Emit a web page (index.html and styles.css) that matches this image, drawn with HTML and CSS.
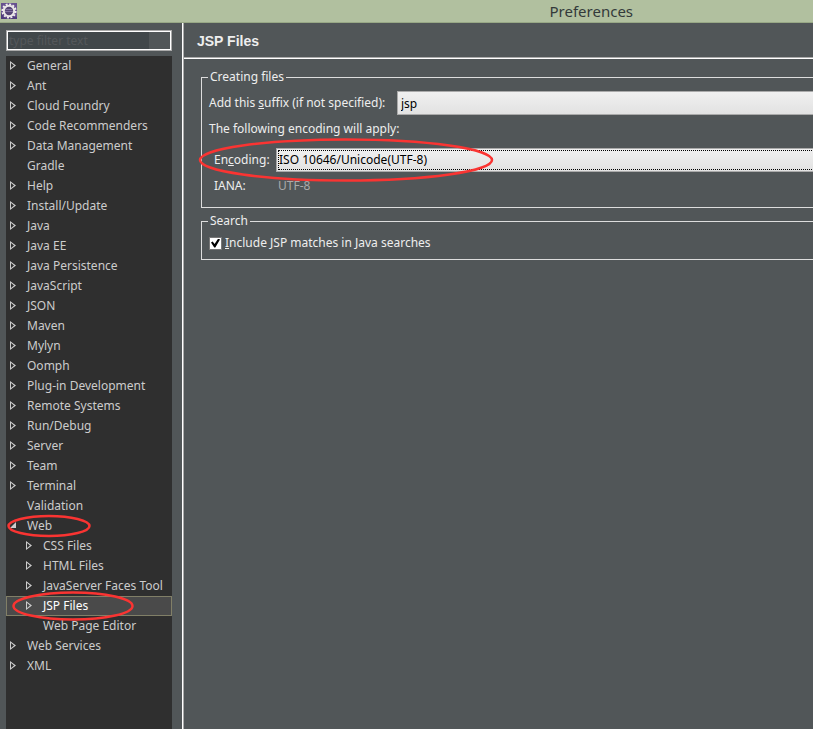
FILE: index.html
```html
<!DOCTYPE html>
<html lang="en">
<head>
<meta charset="utf-8">
<title>Preferences</title>
<link rel="stylesheet" href="styles.css">
</head>
<body>
<div class="window">
  <header class="titlebar">
    <svg class="app-icon" viewBox="0 0 16 16" aria-hidden="true">
      <rect width="16" height="16" fill="#67518f"/>
      <path d="M0 16V10L16 14V16Z" fill="#503b7c"/>
      <circle cx="8" cy="8" r="6.7" fill="none" stroke="#f2eff0" stroke-width="1.8" stroke-dasharray="2 1.5"/>
      <circle cx="8" cy="8" r="5.2" fill="#554575" stroke="#ece8e8" stroke-width="2"/>
      <path d="M4.5 6.500h7M4 8.500h8" stroke="#8474a2"/>
    </svg>
    <h1 class="window-title">Preferences</h1>
  </header>
  <div class="body">
    <nav class="sidebar" aria-label="Preference pages">
      <div class="filter"><input type="text" class="filter-input" placeholder="type filter text" aria-label="Filter"></div>
      <ul class="tree">
        <li class="node closed">General</li>
        <li class="node closed">Ant</li>
        <li class="node closed">Cloud Foundry</li>
        <li class="node closed">Code Recommenders</li>
        <li class="node closed">Data Management</li>
        <li class="node">Gradle</li>
        <li class="node closed">Help</li>
        <li class="node closed">Install/Update</li>
        <li class="node closed">Java</li>
        <li class="node closed">Java EE</li>
        <li class="node closed">Java Persistence</li>
        <li class="node closed">JavaScript</li>
        <li class="node closed">JSON</li>
        <li class="node closed">Maven</li>
        <li class="node closed">Mylyn</li>
        <li class="node closed">Oomph</li>
        <li class="node closed">Plug-in Development</li>
        <li class="node closed">Remote Systems</li>
        <li class="node closed">Run/Debug</li>
        <li class="node closed">Server</li>
        <li class="node closed">Team</li>
        <li class="node closed">Terminal</li>
        <li class="node">Validation</li>
        <li class="node open">Web<svg class="ring ring-web" viewBox="0 0 84 22" aria-hidden="true"><ellipse cx="41" cy="11" rx="40.500" ry="10"/></svg></li>
        <li class="node child closed">CSS Files</li>
        <li class="node child closed">HTML Files</li>
        <li class="node child closed">JavaServer Faces Tool</li>
        <li class="node child closed selected">JSP Files<svg class="ring ring-jsp" viewBox="0 0 122 30" aria-hidden="true"><ellipse cx="61" cy="15" rx="59.500" ry="13.500"/></svg></li>
        <li class="node child">Web Page Editor</li>
        <li class="node closed">Web Services</li>
        <li class="node closed">XML</li>
      </ul>
    </nav>
    <main class="page">
      <h2 class="page-title">JSP Files</h2>
      <form class="groups">
        <fieldset class="group">
          <legend>Creating files</legend>
          <div class="row">
            <label for="suffix" class="suffix-label">Add this <u>s</u>uffix (if not specified):</label>
            <input type="text" id="suffix" class="field" value="jsp">
          </div>
          <p class="note">The following encoding will apply:</p>
          <div class="row encoding">
            <label for="encoding" class="indent">En<u>c</u>oding:</label>
            <select id="encoding" class="field select"><option>ISO 10646/Unicode(UTF-8)</option></select>
            <svg class="ring ring-encoding" viewBox="0 0 296 44" aria-hidden="true"><ellipse cx="148" cy="22" rx="146" ry="20.500"/></svg>
          </div>
          <div class="row iana">
            <span class="indent">IANA:</span>
            <output class="iana-value">UTF-8</output>
          </div>
        </fieldset>
        <fieldset class="group search">
          <legend>Search</legend>
          <label class="check"><input type="checkbox" checked><span><u>I</u>nclude JSP matches in Java searches</span></label>
        </fieldset>
      </form>
    </main>
  </div>
</div>
</body>
</html>
```

FILE: styles.css
```css
* { box-sizing: border-box; }

body {
  margin: 0;
  background: #515658;
  color: #eee;
  font: 12px/20px "Noto Sans", "Open Sans", sans-serif;
}

.window {
  display: flex;
  flex-direction: column;
  height: 100vh;
  overflow: hidden;
}

.titlebar {
  display: flex;
  align-items: center;
  flex: none;
  height: 23px;
  padding-left: 1px;
  background: #b1c09f;
  border-bottom: 1px solid #98a886;
}

.app-icon { flex: none; width: 16px; height: 16px; }

.window-title {
  flex: 1;
  margin: 0 0 0 46%;
  padding-left: 159px;
  color: #333a3a;
  font-size: 15px;
  font-weight: 400;
  white-space: nowrap;
}

.body { display: flex; flex: 1; min-height: 0; }

.sidebar {
  display: flex;
  flex-direction: column;
  flex: none;
  width: 184px;
  padding: 7px 10px 0 6px;
  border-right: 2px ridge #fff;
}

.filter {
  flex: none;
  display: flex;
  height: 21px;
  margin-bottom: 5px;
  padding-right: 22px;
  border: 1px solid #ababab;
  outline: 1px solid #fff;
  outline-offset: -2px;
}

.filter-input {
  width: 100%;
  padding: 0 2px;
  border: 0;
  background: #41474a;
  color: #eee;
  font: inherit;
}

.filter-input::placeholder { color: #54575a; opacity: 1; }

.tree {
  flex: 1;
  margin: 0;
  padding: 0;
  overflow: hidden;
  background: #2f2f2f;
  color: #ccc;
  list-style: none;
}

.node {
  position: relative;
  height: 20px;
  padding-left: 21px;
  white-space: nowrap;
}

.child { padding-left: 37px; }

.closed::before,
.open::before {
  content: "";
  position: absolute;
  top: 5px;
  left: 4px;
  width: 6px;
  height: 9px;
  background: #ccc;
  clip-path: polygon(evenodd, 0 0, 6px 4.5px, 0 9px, 0 0, 1px 2px, 1px 7px, 4px 4.5px, 1px 2px);
}

.child::before { left: 20px; }

.open::before { top: 6px; height: 6px; clip-path: polygon(100% 0, 100% 100%, 0 100%); }

.selected {
  background: #4a4a4a;
  color: #fff;
  box-shadow: inset 0 0 0 1px #817f67;
}

.ring {
  position: absolute;
  z-index: 1;
  overflow: visible;
  fill: none;
  stroke: #fa3432;
  stroke-width: 2.5px;
  pointer-events: none;
}

.ring-web { top: -1px; left: 2px; width: 84px; height: 22px; }
.ring-jsp { top: -5px; left: 6px; width: 122px; height: 30px; }
.ring-encoding { top: -10px; left: -11px; width: 296px; height: 44px; }

.page { flex: 1; min-width: 0; }

.page-title {
  height: 36px;
  margin: 0;
  padding-left: 13px;
  border-bottom: 1px solid #fff;
  box-shadow: inset 0 -1px #aaa;
  font: 700 14px/36px "Liberation Sans", Arial, sans-serif;
}

/* The groups continue beyond the right edge of the window. */
.groups { padding: 10px 0 0 17px; margin-right: -20px; }

.group {
  min-width: 0;
  margin: 0 0 5px;
  padding: 6px 0 11px 7px;
  border: 1px solid #ddd;
}

.group legend { margin-left: -1px; padding: 0 2px; line-height: 16px; }

.search { padding-bottom: 6px; padding-top: 4px; }

.row { display: flex; align-items: center; gap: 5px; white-space: nowrap; }

.suffix-label { min-width: 183px; }

.note { margin: 4px 0 9px; }

.encoding { position: relative; }

.indent { flex: none; width: 62px; padding-left: 5px; }

.field {
  flex: 1;
  min-width: 0;
  height: 24px;
  padding: 0 3px;
  border: 1px solid #aaa;
  border-radius: 0;
  background: linear-gradient(#f0f0f0, #e2e2e2);
  color: #000;
  font: inherit;
}

.select {
  appearance: none;
  padding: 0 2px;
  outline: 1px dotted #000;
  outline-offset: -3px;
}

.iana { margin-top: 4px; }
.iana-value { color: #aaa; padding-left: 2px; }

.check { display: flex; align-items: center; gap: 3px; }

.check input {
  appearance: none;
  display: grid;
  width: 13px;
  height: 13px;
  margin: 0;
  border: 1px solid #777;
  background: #fff;
}

.check input:checked::before {
  content: "";
  margin: 1px;
  background: #000;
  clip-path: polygon(0 45%, 18% 32%, 40% 60%, 80% 0, 100% 12%, 48% 100%, 36% 100%);
}
```
